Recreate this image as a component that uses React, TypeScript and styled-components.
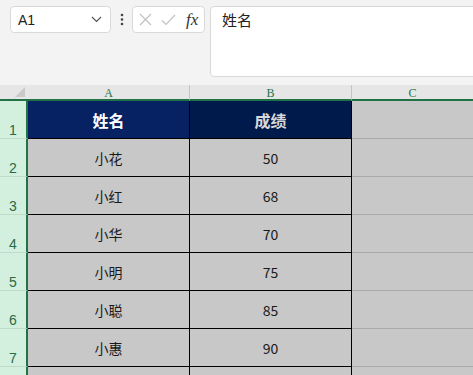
import React from "react";
import styled, { createGlobalStyle } from "styled-components";

const Global = createGlobalStyle`
  html, body { margin: 0; padding: 0; }
  body { background: #f3f3f3; font-family: "Liberation Sans", "Noto Sans CJK SC", sans-serif; }
`;

const Page = styled.div`
  width: 473px;
  height: 375px;
  overflow: hidden;
  background: #f3f3f3;
  display: flex;
  flex-direction: column;
`;

const Toolbar = styled.div`
  height: 85px;
  flex: none;
  display: flex;
  align-items: flex-start;
  padding: 6px 0 0 10px;
  box-sizing: border-box;
`;

const NameBox = styled.div`
  width: 101px;
  height: 27px;
  box-sizing: border-box;
  background: #fff;
  border: 1px solid #d9d9d9;
  border-radius: 4px;
  display: flex;
  align-items: center;
  justify-content: space-between;
  padding: 0 8px 0 7px;
  font-size: 14px;
  color: #222;
`;

const Dots = styled.div`
  width: 21px;
  height: 27px;
  display: flex;
  align-items: center;
  justify-content: center;
`;

const FxBox = styled.div`
  width: 73px;
  height: 27px;
  box-sizing: border-box;
  background: #fff;
  border: 1px solid #d9d9d9;
  border-radius: 4px;
  display: flex;
  align-items: center;
  padding: 0 5px 0 6px;
  gap: 9px;
`;

const Fx = styled.span`
  font-family: "Liberation Serif", serif;
  font-style: italic;
  font-size: 17px;
  color: #333;
  margin-left: 1px;
`;

const FormulaBar = styled.div`
  flex: 1;
  margin-left: 5px;
  margin-right: -8px;
  height: 71px;
  box-sizing: border-box;
  background: #fff;
  border: 1px solid #d9d9d9;
  border-radius: 4px;
  padding: 2px 11px;
  font-family: "Noto Sans CJK SC", sans-serif;
  font-size: 15px;
  color: #222;
`;

const Sheet = styled.div`
  display: grid;
  grid-template-columns: 28px 162px 162px 1fr;
  grid-auto-rows: 38px;
  grid-template-rows: 16px;
`;

const Corner = styled.div`
  background: #e6e6e6;
  border-bottom: 2px solid #217346;
  box-sizing: border-box;
  position: relative;
  &::after {
    content: "";
    position: absolute;
    right: 3px;
    bottom: 2px;
    width: 0;
    height: 0;
    border-left: 10px solid transparent;
    border-bottom: 10px solid #c9c9c9;
  }
`;

const ColHead = styled.div<{ $last?: boolean }>`
  background: #e6e6e6;
  border-bottom: 2px solid #217346;
  border-right: ${(p) => (p.$last ? "none" : "1px solid #c4c4c4")};
  box-sizing: border-box;
  display: flex;
  align-items: center;
  justify-content: center;
  font-family: "Liberation Serif", serif;
  font-size: 12px;
  color: #217346;
  line-height: 1;
  padding-top: 1px;
`;

const RowHead = styled.div`
  background: #d3efde;
  border-right: 2px solid #217346;
  border-bottom: 1px solid #bfdccb;
  box-sizing: border-box;
  display: flex;
  align-items: flex-end;
  justify-content: center;
  padding-bottom: 0;
  font-family: "Liberation Sans", sans-serif;
  font-size: 14px;
  color: #2a6a46;
`;

const Cell = styled.div<{ $bg: string; $fg: string; $bold?: boolean; $size: number }>`
  background: ${(p) => p.$bg};
  color: ${(p) => p.$fg};
  border-right: 1px solid #000;
  border-bottom: 1px solid #000;
  box-sizing: border-box;
  display: flex;
  align-items: center;
  justify-content: center;
  font-family: "Noto Sans CJK SC", sans-serif;
  font-size: ${(p) => p.$size}px;
  font-weight: ${(p) => (p.$bold ? 700 : 400)};
`;

const EmptyCell = styled.div`
  background: #c8c8c8;
  border-bottom: 1px solid #aaaaaa;
  box-sizing: border-box;
`;

const data: [string, string][] = [
  ["小花", "50"],
  ["小红", "68"],
  ["小华", "70"],
  ["小明", "75"],
  ["小聪", "85"],
  ["小惠", "90"],
  ["", ""],
];

export default function App() {
  return (
    <Page>
      <Global />
      <Toolbar>
        <NameBox>
          <span>A1</span>
          <svg width="11" height="7" viewBox="0 0 11 7">
            <path d="M1 1 L5.5 5.5 L10 1" fill="none" stroke="#555" strokeWidth="1.2" />
          </svg>
        </NameBox>
        <Dots>
          <svg width="4" height="13" viewBox="0 0 4 13">
            <circle cx="2" cy="2" r="1.3" fill="#444" />
            <circle cx="2" cy="6.5" r="1.3" fill="#444" />
            <circle cx="2" cy="11" r="1.3" fill="#444" />
          </svg>
        </Dots>
        <FxBox>
          <svg width="13" height="13" viewBox="0 0 13 13">
            <path d="M1 1 L12 12 M12 1 L1 12" stroke="#c2c2c2" strokeWidth="1.2" />
          </svg>
          <svg width="15" height="12" viewBox="0 0 15 12">
            <path d="M1 6.5 L5 10.5 L14 1" fill="none" stroke="#c2c2c2" strokeWidth="1.2" />
          </svg>
          <Fx>fx</Fx>
        </FxBox>
        <FormulaBar>姓名</FormulaBar>
      </Toolbar>
      <Sheet>
        <Corner />
        <ColHead>A</ColHead>
        <ColHead>B</ColHead>
        <ColHead $last>C</ColHead>

        <RowHead>1</RowHead>
        <Cell $bg="#072263" $fg="#ffffff" $bold $size={16}>姓名</Cell>
        <Cell $bg="#001a4c" $fg="#d8d8d8" $bold $size={16}>成绩</Cell>
        <EmptyCell />

        {data.map(([n, s], i) => (
          <React.Fragment key={i}>
            <RowHead>{i < data.length - 1 ? i + 2 : ""}</RowHead>
            <Cell $bg="#c8c8c8" $fg="#1a1a1a" $size={14}>{n}</Cell>
            <Cell $bg="#c8c8c8" $fg="#1a1a1a" $size={14}>{s}</Cell>
            <EmptyCell />
          </React.Fragment>
        ))}
      </Sheet>
    </Page>
  );
}
